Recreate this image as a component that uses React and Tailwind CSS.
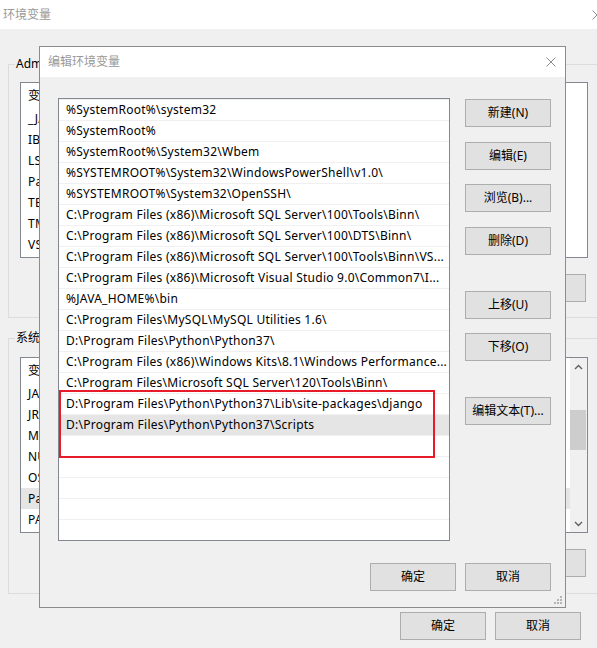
import React from 'react';

const paths = [
  '%SystemRoot%\\system32',
  '%SystemRoot%',
  '%SystemRoot%\\System32\\Wbem',
  '%SYSTEMROOT%\\System32\\WindowsPowerShell\\v1.0\\',
  '%SYSTEMROOT%\\System32\\OpenSSH\\',
  'C:\\Program Files (x86)\\Microsoft SQL Server\\100\\Tools\\Binn\\',
  'C:\\Program Files (x86)\\Microsoft SQL Server\\100\\DTS\\Binn\\',
  'C:\\Program Files (x86)\\Microsoft SQL Server\\100\\Tools\\Binn\\VS...',
  'C:\\Program Files (x86)\\Microsoft Visual Studio 9.0\\Common7\\I...',
  '%JAVA_HOME%\\bin',
  'C:\\Program Files\\MySQL\\MySQL Utilities 1.6\\',
  'D:\\Program Files\\Python\\Python37\\',
  'C:\\Program Files (x86)\\Windows Kits\\8.1\\Windows Performance...',
  'C:\\Program Files\\Microsoft SQL Server\\120\\Tools\\Binn\\',
  'D:\\Program Files\\Python\\Python37\\Lib\\site-packages\\django',
  'D:\\Program Files\\Python\\Python37\\Scripts',
  '',
  '',
  '',
  '',
  '',
];

const userVars = ['_JAVA_OPTIONS', 'IBM_JAVA_OPTIONS', 'LSHOST', 'Path', 'TEMP', 'TMP', 'VS140COMNTOOLS'];
const sysVars = ['JAVA_HOME', 'JRE_HOME', 'MYSQL_HOME', 'NUMBER_OF_PROCESSORS', 'OS', 'Path', 'PATHEXT'];

function Btn({ children, className = '' }) {
  return (
    <div
      className={`flex h-[28px] w-[86px] shrink-0 items-center justify-center border border-[#adadad] bg-[#e1e1e1] text-[12px] text-black ${className}`}
    >
      {children}
    </div>
  );
}

function CloseX({ className = '' }) {
  return (
    <svg width="10" height="10" viewBox="0 0 10 10" className={className}>
      <path d="M0.5 0.5 L9.5 9.5 M9.5 0.5 L0.5 9.5" stroke="#8a8a8a" strokeWidth="1" fill="none" />
    </svg>
  );
}

function Chevron({ up }) {
  return (
    <svg width="9" height="6" viewBox="0 0 9 6">
      <path
        d={up ? 'M1 5 L4.5 1.5 L8 5' : 'M1 1 L4.5 4.5 L8 1'}
        stroke="#606060"
        strokeWidth="1.4"
        fill="none"
      />
    </svg>
  );
}

function Group({ label, className = '', children }) {
  return (
    <div className={`relative w-[592px] border border-[#dcdcdc] pl-[11px] ${className}`}>
      <span className="absolute -top-[9px] left-[6px] bg-[#f0f0f0] px-px text-[12px] leading-[16px] text-black">
        {label}
      </span>
      {children}
    </div>
  );
}

function VarList({ rows, selected, scroll }) {
  return (
    <div className="flex h-[176px] w-[568px] border border-[#828790] bg-white">
      <div className="flex-1 overflow-hidden">
        <div className="flex h-[25px] items-center text-[12px] text-black">
          <span className="w-[150px] pl-[7px]">变量</span>
          <span className="border-l border-[#e5e5e5] pl-[7px]">值</span>
        </div>
        {rows.map((r, i) => (
          <div
            key={i}
            className={`flex h-[21px] items-center whitespace-nowrap pl-[7px] text-[12px] tracking-[0.25px] text-black ${
              i === selected ? 'bg-[#e5e5e5]' : ''
            }`}
          >
            {r}
          </div>
        ))}
      </div>
      {scroll && (
        <div className="flex w-[17px] flex-col bg-[#f0f0f0]">
          <div className="flex h-[17px] items-center justify-center">
            <Chevron up />
          </div>
          <div className="flex-1">
            <div className="mt-[35px] mr-px h-[40px] bg-[#cdcdcd]" />
          </div>
          <div className="flex h-[17px] items-center justify-center">
            <Chevron />
          </div>
        </div>
      )}
    </div>
  );
}

export default function App() {
  return (
    <div className="relative h-[648px] w-[597px] overflow-hidden bg-[#f0f0f0] font-['Noto_Sans','Noto_Sans_CJK_SC',sans-serif]">
      {/* 背景窗口：环境变量 */}
      <div className="flex h-[29px] items-center justify-between bg-white pl-[3px] text-[12px] text-[#999]">
        <span>环境变量</span>
        <CloseX className="-mr-[5px]" />
      </div>
      <div className="pl-[8px]">
        <Group label="Administrator 的用户变量(U)" className="mt-[35px] h-[254px] pt-[17px]">
          <VarList rows={userVars} />
          <div className="mt-[16px] flex w-[568px] justify-end gap-[8px] pr-[2px]">
            <Btn>新建(N)...</Btn>
            <Btn>编辑(E)...</Btn>
            <Btn>删除(D)</Btn>
          </div>
        </Group>
        <Group label="系统变量(S)" className="mt-[20px] h-[256px] pt-[18px]">
          <VarList rows={sysVars} selected={5} scroll />
          <div className="mt-[16px] flex w-[568px] justify-end gap-[8px] pr-[2px]">
            <Btn>新建(W)...</Btn>
            <Btn>编辑(I)...</Btn>
            <Btn>删除(L)</Btn>
          </div>
        </Group>
      </div>
      <div className="mt-[18px] flex justify-end gap-[9px] pr-[16px]">
        <Btn>确定</Btn>
        <Btn>取消</Btn>
      </div>

      {/* 前景对话框：编辑环境变量 */}
      <div className="absolute left-[39px] top-[46px] flex h-[562px] w-[527px] flex-col border border-[#8c8c8c] bg-[#f0f0f0]">
        <div className="flex h-[30px] shrink-0 items-center justify-between bg-white pl-[8px] pr-[9px] text-[12px] text-[#999]">
          <span>编辑环境变量</span>
          <CloseX />
        </div>
        <div className="flex pl-[18px] pt-[21px]">
          <div className="relative h-[443px] w-[392px] shrink-0 overflow-hidden border border-[#828790] bg-white">
            {paths.map((p, i) => (
              <div
                key={i}
                className={`flex h-[21px] items-center overflow-hidden whitespace-nowrap border-t border-[#f0f0f0] pl-[7px] text-[12px] tracking-[0.25px] text-black ${
                  i === 15 ? 'bg-[#e5e5e5]' : ''
                }`}
              >
                {p}
              </div>
            ))}
            <div className="absolute left-0 top-[291px] h-[68px] w-[376px] border-2 border-[#e81b2b]" />
          </div>
          <div className="ml-[15px] flex flex-col pt-px">
            <Btn>新建(N)</Btn>
            <Btn className="mt-[15px]">编辑(E)</Btn>
            <Btn className="mt-[14px]">浏览(B)...</Btn>
            <Btn className="mt-[15px]">删除(D)</Btn>
            <Btn className="mt-[36px]">上移(U)</Btn>
            <Btn className="mt-[14px]">下移(O)</Btn>
            <Btn className="mt-[36px]">编辑文本(T)...</Btn>
          </div>
        </div>
        <div className="mt-[22px] flex justify-end gap-[9px] pr-[14px]">
          <Btn>确定</Btn>
          <Btn>取消</Btn>
        </div>
        <svg width="10" height="10" viewBox="0 0 10 10" className="absolute bottom-[2px] right-[2px]">
          <rect x="7" y="1" width="2" height="2" fill="#b5b5b5" />
          <rect x="4" y="4" width="2" height="2" fill="#b5b5b5" />
          <rect x="7" y="4" width="2" height="2" fill="#b5b5b5" />
          <rect x="1" y="7" width="2" height="2" fill="#b5b5b5" />
          <rect x="4" y="7" width="2" height="2" fill="#b5b5b5" />
          <rect x="7" y="7" width="2" height="2" fill="#b5b5b5" />
        </svg>
      </div>
    </div>
  );
}
